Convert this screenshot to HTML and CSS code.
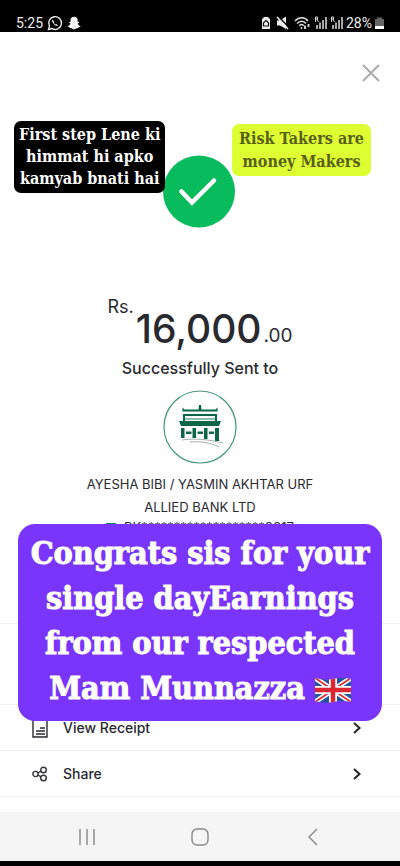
FILE: index.html
```html
<!DOCTYPE html>
<html lang="en">
<head>
<meta charset="utf-8">
<meta name="viewport" content="width=device-width, initial-scale=1">
<title>Transfer receipt</title>
<link rel="stylesheet" href="styles.css">
</head>
<body>
<header class="status">
  <div class="status-group">
    <span>5:25</span>
    <svg width="16" height="16" viewBox="0 0 16 16" fill="none" stroke="#eee" stroke-width="1.4"><path d="M1.500 14.500l1-3.400A6.400 6.400 0 1 1 5 13.600z"/><path d="M5.400 4.600c-.8 1-.2 2.900 1.500 4.600s3.300 2 4.200 1.200l-1.600-1.500-.9.600c-.9-.4-1.500-1.100-1.900-2l.5-.9z" fill="#eee" stroke="none"/></svg>
    <svg width="14" height="14" viewBox="0 0 14 14" fill="#f4f4f4"><path d="M7 .8c2.300 0 3.700 1.500 3.700 3.500v1.600l1.200-.2.200.8-1.300.9c.4 1.500 1.400 2.300 2.700 2.700.1 1-1.300 1.200-2 1.400-.3 1-1 .7-1.900.7C8.500 12.900 8 13.400 7 13.400s-1.500-.5-2.400-1.200c-.9 0-1.600.3-1.900-.7-.7-.2-2.100-.4-2-1.400 1.300-.4 2.300-1.200 2.700-2.700l-1.300-.9.200-.8 1.200.2V4.300C3.500 2.300 4.700.8 7 .8z"/></svg>
  </div>
  <div class="status-group status-right">
    <svg width="10" height="14" viewBox="0 0 10 14"><path d="M2.500 1h5v1.500H9V13H1V2.500h1.500z" fill="#eee"/><path d="M5 4.500l2.500 2.300V10h-5V6.800z" fill="none" stroke="#111" stroke-width="1.200"/></svg>
    <svg class="mute" width="13" height="14" viewBox="0 0 13 14"><path d="M1 4.500h3l6-4v12.500L4 9.500H1z" fill="#eee"/><path d="M2 0l11 11.500" stroke="#000" stroke-width="1.500"/><path d="M1 1l11 12" stroke="#eee" stroke-width="1.600"/></svg>
    <svg width="17" height="14" viewBox="0 0 17 14" fill="none" stroke="#ddd" stroke-width="1.500"><path d="M1 5c4-4.300 10-4.300 13 0M3 7.500c3-3.100 6.500-3.100 9 0M5.300 9.700c1.500-1.500 3-1.500 4.400 0M7.500 11v2"/><path d="M11 9.500v3.500M14.500 8v3" stroke-width="1.800"/></svg>
    <svg width="13" height="14" viewBox="0 0 13 14" stroke="#ddd" fill="none" stroke-width="1.500"><path d="M1.500 6V1h2v2h-2M3 3l1.500 3" stroke-width="1"/><path d="M3 9v4M6 6.500V13M9 4v9M12 1v12"/></svg>
    <svg width="13" height="14" viewBox="0 0 13 14" stroke="#ddd" fill="none" stroke-width="1.500"><path d="M1.500 6V1h2v2h-2M3 3l1.500 3" stroke-width="1"/><path d="M3 9v4M6 6.500V13M9 4v9M12 1v12"/></svg>
    <span>28%</span>
    <svg width="9" height="14" viewBox="0 0 9 14"><path d="M2 1.500h5V3h2v10H0V3h2z" fill="#666"/><path d="M0 10h9v3H0z" fill="#fff"/></svg>
  </div>
</header>

<main class="screen">
  <div class="toolbar">
    <button class="icon-button" aria-label="Close"><svg width="20" height="20" viewBox="0 0 20 20" stroke="#aaa" stroke-width="2" fill="none"><path d="M2 2l16 16M18 2L2 18"/></svg></button>
  </div>

  <svg class="success" width="74" height="74" viewBox="0 0 74 74" role="img" aria-label="Success"><circle cx="36" cy="36.500" r="36" fill="#08bb5d"/><path d="M18.500 36.500L29 47.500 51 25.500" fill="none" stroke="#fff" stroke-width="4.500" stroke-linecap="round"/></svg>

  <div class="amount"><span class="currency">Rs.</span><strong>16,000</strong><span class="decimals">.00</span></div>
  <p class="sent">Successfully Sent to</p>

  <svg class="bank" width="74" height="74" viewBox="0 0 74 74" role="img" aria-label="Allied Bank">
    <circle cx="37" cy="37" r="36" fill="#fff" stroke="#44977a" stroke-width="1.200"/>
    <g fill="#0b6547">
      <path d="M36 15h2l.5 4.500h14l2-2v4h-35v-4l2 2h14z"/>
      <path d="M20 24h34v2H20zM20 25h2v6h-2zM52 25h2v6h-2z"/>
      <path d="M22 28h30v2H22z" fill="#8fbca9"/>
      <path d="M16 31h42l-2 5H18z"/>
      <path d="M18 38h3.500v10H18zM29.500 38H33v10h-3.500zM41 38h3.500v11H41zM52 38h4v13h-4z"/>
      <path d="M23 41.500h5.500V44H23zM34.500 41.500H40V44h-5.500zM46 41.500h5V44h-5z"/>
    </g>
    <path d="M19 50c13-2 27-.5 41 3M27 52c12-1 21 1 29 5" fill="none" stroke="#8c9b95" stroke-width=".8"/>
  </svg>

  <div class="recipient">
    <p>AYESHA BIBI / YASMIN AKHTAR URF</p>
    <p>ALLIED BANK LTD</p>
    <p class="account"><svg width="10" height="12" viewBox="0 0 10 12" fill="#168062"><path d="M0 2h10v2H0zM1 5h2v6H1zM7 5h2v6H7z"/></svg><span>PK*******************0017</span></p>
  </div>

  <div class="actions">
    <div class="spacer-row"></div>
    <button class="action">
      <svg width="16" height="20" viewBox="0 0 16 20" fill="none" stroke="#292931" stroke-width="1.400"><path d="M1 1h14v18H1zM4 16h9M4 13h9M8 10h5"/></svg>
      <span>View Receipt</span>
      <svg class="chevron" width="10" height="14" viewBox="0 0 10 14"><path d="M2 2l5.500 5L2 12" fill="none" stroke="#24242b" stroke-width="2"/></svg>
    </button>
    <button class="action">
      <svg width="16" height="16" viewBox="0 0 16 16" fill="none" stroke="#34343b" stroke-width="1.400"><circle cx="3.500" cy="8" r="2.600"/><circle cx="11.500" cy="4" r="2.800"/><circle cx="11.500" cy="12" r="2.800"/><path d="M5.900 7l3.200-1.800M5.900 9l3.200 1.800"/></svg>
      <span>Share</span>
      <svg class="chevron" width="10" height="14" viewBox="0 0 10 14"><path d="M2 2l5.500 5L2 12" fill="none" stroke="#24242b" stroke-width="2"/></svg>
    </button>
  </div>

  <div class="sticker sticker-dark">First step Lene ki<br>himmat hi apko<br>kamyab bnati hai</div>
  <div class="sticker sticker-lime">Risk Takers are<br>money Makers</div>
  <div class="sticker sticker-violet">Congrats sis for your<br>single dayEarnings<br>from our respected<br>Mam Munnazza <svg width="36" height="26" viewBox="0 0 36 26" role="img" aria-label="United Kingdom flag"><defs><clipPath id="flag"><path d="M0 1q9 3 18 1t18 0v23q-9-2-18 0T0 24z"/></clipPath></defs><g clip-path="url(#flag)"><path fill="#24549c" d="M0 0h36v26H0z"/><path d="M0 1l36 24M36 1L0 25" stroke="#fff" stroke-width="5"/><path d="M0 1l36 24M36 1L0 25" stroke="#d92d35" stroke-width="1.800"/><path d="M18 0v26M0 13h36" stroke="#fff" stroke-width="8"/><path d="M18 0v26M0 13h36" stroke="#dc2632" stroke-width="4.500"/></g></svg></div>
</main>

<nav class="system-nav" aria-label="System navigation">
  <button class="icon-button" aria-label="Recent apps"><svg width="18" height="18" viewBox="0 0 18 18" stroke="#888" stroke-width="1.400"><path d="M2 1v16M9 1v16M16 1v16"/></svg></button>
  <button class="icon-button" aria-label="Home"><svg width="18" height="18" viewBox="0 0 18 18" fill="none" stroke="#888" stroke-width="1.400"><rect x="1" y="1" width="16" height="16" rx="5"/></svg></button>
  <button class="icon-button" aria-label="Back"><svg width="18" height="18" viewBox="0 0 18 18" fill="none" stroke="#888" stroke-width="1.400"><path d="M13 1L5 9l8 8"/></svg></button>
</nav>
</body>
</html>
```
FILE: styles.css
```css
* { box-sizing: border-box; }
body {
  margin: 0;
  min-height: 100vh;
  display: flex;
  flex-direction: column;
  background: #fff;
  color: #292930;
  font-family: Inter, sans-serif;
}
p { margin: 0; }
svg { flex: none; }
button {
  border: 0;
  padding: 0;
  background: none;
  color: inherit;
  font: inherit;
}
.status {
  height: 32px;
  padding: 14px 16px 0;
  display: flex;
  justify-content: space-between;
  background: #000;
  color: #eee;
  font: 14px/18px Roboto, sans-serif;
}
.status-group { display: flex; align-items: center; gap: 4px; }
.status-right { gap: 3px; }
.mute { margin: 0 2px; }
.screen {
  position: relative;
  flex: 1;
  display: flex;
  flex-direction: column;
  align-items: center;
}
.toolbar {
  width: 100%;
  padding: 31px 19px 0;
  display: flex;
  justify-content: flex-end;
}
.icon-button { display: flex; }
.success { margin-top: 72px; }
.amount {
  margin-top: 68px;
  height: 56px;
  display: flex;
  align-items: flex-start;
}
.currency { font-size: 18px; line-height: 20px; }
.amount strong {
  padding: 8px 0 0 2px;
  font-size: 39px;
  line-height: 48px;
  font-weight: 500;
}
.decimals {
  align-self: flex-end;
  padding-left: 2px;
  font-size: 19px;
  line-height: 34px;
}
.sent {
  margin-top: 3px;
  font-size: 16px;
  line-height: 24px;
  font-weight: 500;
}
.bank { margin-top: 10px; }
.recipient {
  margin-top: 9px;
  display: flex;
  flex-direction: column;
  align-items: center;
  font-size: 13px;
  line-height: 23px;
}
.account {
  display: flex;
  align-items: center;
  gap: 8px;
  line-height: 16px;
}
.actions {
  width: 100%;
  margin-top: 88px;
  border-top: 1px solid #f0f0f0;
}
.spacer-row { height: 81px; border-bottom: 1px solid #f0f0f0; }
.action {
  width: 100%;
  height: 46px;
  padding: 0 38px 0 32px;
  display: flex;
  align-items: center;
  gap: 15px;
  border-bottom: 1px solid #f0f0f0;
  font-size: 14px;
  font-weight: 500;
}
.chevron { margin-left: auto; }
.sticker {
  position: absolute;
  text-align: center;
  white-space: nowrap;
  font-family: "DejaVu Serif Condensed", "DejaVu Serif", serif;
  font-weight: 700;
}
.sticker-dark {
  top: 89px;
  left: 14px;
  padding: 3px 5px;
  border-radius: 7px;
  background: #000;
  color: #fff;
  font-size: 16px;
  line-height: 22px;
}
.sticker-lime {
  top: 92px;
  right: 29px;
  padding: 3px 7px;
  border-radius: 7px;
  background: #deff32;
  color: #595f13;
  font-size: 16px;
  line-height: 23px;
}
.sticker-violet {
  top: 492px;
  left: 18px;
  right: 18px;
  padding: 7px 0 10px;
  border-radius: 17px;
  background: #7935fb;
  color: #fff;
  font-size: 32px;
  line-height: 45px;
  -webkit-text-stroke: 1px #fff;
}
.sticker-violet svg { vertical-align: -4px; }
.system-nav {
  height: 54px;
  padding: 0 78px;
  display: flex;
  justify-content: space-between;
  align-items: center;
  border-bottom: 5px solid #000;
  background: #f5f5f5;
}
```
